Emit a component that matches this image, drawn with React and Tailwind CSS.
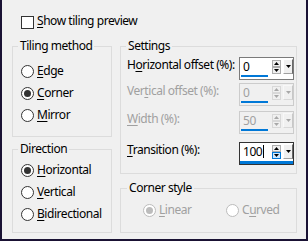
import React from 'react';

const FONT = "font-['Noto_Sans',sans-serif]";

function Mn({ text, k, className = '' }) {
  return (
    <span className={className}>
      {text.slice(0, k)}
      <span className="underline decoration-1 underline-offset-[2px]">{text[k]}</span>
      {text.slice(k + 1)}
    </span>
  );
}

function Radio({ checked, disabled }) {
  return (
    <span
      className={`flex h-[13px] w-[13px] shrink-0 items-center justify-center rounded-full border bg-white ${
        disabled ? 'border-[#bcbcbc]' : 'border-[#333333]'
      }`}
    >
      {checked && (
        <span className={`h-[7px] w-[7px] rounded-full ${disabled ? 'bg-[#bcbcbc]' : 'bg-[#333333]'}`} />
      )}
    </span>
  );
}

function Group({ title, className, titleClass = 'left-[4px]', children }) {
  return (
    <div className={`relative border border-[#dcdcdc] ${className}`}>
      <span className={`absolute top-[-9px] bg-[#f0f0f0] px-[2px] leading-4 ${titleClass}`}>{title}</span>
      {children}
    </div>
  );
}

function Tri({ up, color }) {
  return (
    <svg width="5" height="3" viewBox="0 0 5 3">
      <path d={up ? 'M0 3L2.5 0L5 3Z' : 'M0 0L5 0L2.5 3Z'} fill={color} />
    </svg>
  );
}

function Spin({ value, disabled, focused }) {
  const border = focused ? 'border-[#333333]' : disabled ? 'border-[#cccccc]' : 'border-[#7a7a7a]';
  const arrow = disabled ? '#a8a8a8' : '#000000';
  return (
    <div className={`flex h-[23px] w-[55px] flex-col border ${border} ${disabled ? 'bg-[#f0f0f0]' : 'bg-white'}`}>
      <div className="flex flex-1 items-start">
        <div className="flex w-[31px] flex-col">
          <div className={`flex h-[17px] items-start pl-[3px] pt-[1px] leading-4 ${disabled ? 'text-[#a0a0a0]' : 'text-black'}`}>
            {value}
            {focused && <span className="ml-[1px] mt-[1px] h-[13px] w-[1px] bg-black" />}
          </div>
          {!focused && <div className="ml-[1px] h-[2px] w-[27px] bg-[#0078d7]" />}
        </div>
        <div className="ml-[1px] mt-[2px] flex w-[9px] flex-col">
          <div className={`flex h-[7px] items-center justify-center border ${disabled ? 'border-[#d8d8d8] bg-[#f0f0f0]' : 'border-[#adadad] bg-[#f0f0f0]'}`}>
            <Tri up color={arrow} />
          </div>
          <div
            className={`flex h-[7px] items-center justify-center border ${
              focused ? 'border-[#0078d7] bg-[#cce8ff]' : disabled ? 'border-[#d8d8d8] bg-[#f0f0f0]' : 'border-[#adadad] bg-[#f0f0f0]'
            }`}
          >
            <Tri color={arrow} />
          </div>
        </div>
        <div
          className={`ml-[2px] mt-[1px] flex h-[15px] w-[10px] items-center justify-center border bg-[#f0f0f0] ${
            disabled
              ? 'border-l-[#f8f8f8] border-t-[#f8f8f8] border-r-[#c8c8c8] border-b-[#d8d8d8]'
              : 'border-l-[#ffffff] border-t-[#ffffff] border-r-[#696969] border-b-[#a0a0a0]'
          }`}
        >
          <Tri color={arrow} />
        </div>
      </div>
      {focused && <div className="h-[3px] w-full bg-[#0078d7]" />}
    </div>
  );
}

function SettingRow({ label, k, value, disabled, focused, className }) {
  return (
    <div className={`flex h-[23px] items-start justify-between ${className}`}>
      <Mn text={label} k={k} className={`leading-4 ${disabled ? 'text-[#a0a0a0]' : 'text-black'}`} />
      <Spin value={value} disabled={disabled} focused={focused} />
    </div>
  );
}

function RadioRow({ label, k, checked, disabled, className = '' }) {
  return (
    <div className={`flex h-[22px] items-center ${className}`}>
      <Radio checked={checked} disabled={disabled} />
      <Mn text={label} k={k} className={`ml-[3px] leading-4 ${disabled ? 'text-[#a0a0a0]' : 'text-black'}`} />
    </div>
  );
}

export default function App() {
  return (
    <div
      className={`${FONT} flex h-[241px] w-[308px] flex-col border-b-2 border-l-2 border-r-2 border-[#1a1234] bg-[#f0f0f0] pl-[10px] pt-[13px] text-[12px] tracking-[-0.45px] text-black`}
    >
      <div className="flex items-start pl-[9px]">
        <span className="mt-[3px] h-[13px] w-[13px] border border-[#333333] bg-white" />
        <Mn text="Show tiling preview" k={0} className="ml-[3px] leading-4" />
      </div>

      <div className="mt-[17px] flex gap-[8px]">
        <div className="flex w-[100px] flex-col">
          <Group title="Tiling method" titleClass="left-[5px]" className="h-[91px] pl-[8px] pt-[13px]">
            <RadioRow label="Edge" k={0} />
            <RadioRow label="Corner" k={0} checked />
            <RadioRow label="Mirror" k={0} />
          </Group>
          <Group title="Direction" titleClass="left-[5px]" className="mt-[12px] h-[84px] pl-[8px] pt-[9px]">
            <RadioRow label="Horizontal" k={0} checked />
            <RadioRow label="Vertical" k={0} />
            <RadioRow label="Bidirectional" k={0} />
          </Group>
        </div>

        <div className="flex w-[177px] flex-col">
          <Group title="Settings" titleClass="left-[5px]" className="h-[128px] pl-[6px] pr-[2px] pt-[10px]">
            <SettingRow label="Horizontal offset (%):" k={1} value="0" />
            <SettingRow label="Vertical offset (%):" k={3} value="0" disabled className="mt-[3px]" />
            <SettingRow label="Width (%):" k={0} value="50" disabled className="mt-[5px]" />
            <SettingRow label="Transition (%):" k={0} value="100" focused className="mt-[8px]" />
          </Group>
          <Group title="Corner style" titleClass="left-[6px]" className="mt-[14px] flex h-[45px] pl-[22px] pt-[10px]">
            <RadioRow label="Linear" k={0} checked disabled className="w-[83px]" />
            <RadioRow label="Curved" k={1} disabled />
          </Group>
        </div>
      </div>
    </div>
  );
}
